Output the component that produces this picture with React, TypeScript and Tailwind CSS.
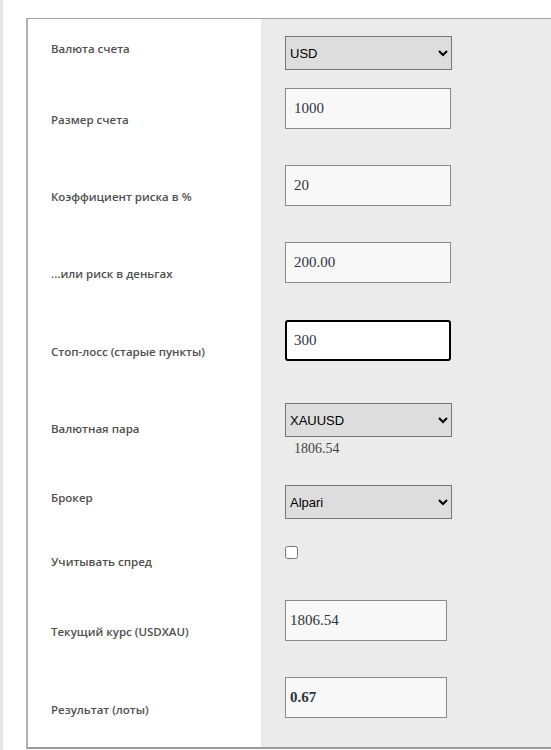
import React from "react";

type Row = {
  label: string;
  rowCls: string;
  labelCls: string;
  control: React.ReactNode;
};

const serif = "font-['Liberation_Serif',Georgia,serif]";
const arial = "font-['Liberation_Sans',Arial,sans-serif]";
const inputBase = `block h-[41px] border border-[#8a8a8a] bg-[#f8f8f8] text-[15px] text-[#2e3440] outline-none ${serif}`;
const selectBase = `block h-[34px] w-[167px] border border-[#767676] bg-[#dddddd] pl-0 text-[13px] text-black outline-none ${arial}`;

export default function App() {
  const rows: Row[] = [
    {
      label: "Валюта счета",
      rowCls: "h-[52px]",
      labelCls: "pt-[22px]",
      control: (
        <select className={selectBase} defaultValue="USD">
          <option>USD</option>
          <option>EUR</option>
        </select>
      ),
    },
    {
      label: "Размер счета",
      rowCls: "h-[77px]",
      labelCls: "pt-[41px]",
      control: <input className={`${inputBase} w-[166px] pl-[8px]`} defaultValue="1000" />,
    },
    {
      label: "Коэффициент риска в %",
      rowCls: "h-[77px]",
      labelCls: "pt-[41px]",
      control: <input className={`${inputBase} w-[166px] pl-[8px]`} defaultValue="20" />,
    },
    {
      label: "...или риск в деньгах",
      rowCls: "h-[78px]",
      labelCls: "pt-[41px]",
      control: <input className={`${inputBase} w-[166px] pl-[8px]`} defaultValue="200.00" />,
    },
    {
      label: "Стоп-лосс (старые пункты)",
      rowCls: "h-[83px]",
      labelCls: "pt-[41px]",
      control: (
        <input
          className={`block h-[41px] w-[166px] rounded-[3px] border-2 border-black bg-white pl-[7px] text-[15px] text-[#2e3440] outline-none ${serif}`}
          defaultValue="300"
        />
      ),
    },
    {
      label: "Валютная пара",
      rowCls: "h-[82px]",
      labelCls: "pt-[35px]",
      control: (
        <div>
          <select className={selectBase} defaultValue="XAUUSD">
            <option>XAUUSD</option>
            <option>EURUSD</option>
          </select>
          <div className={`mt-[3px] pl-[9px] text-[14px] leading-[18px] text-[#444] ${serif}`}>1806.54</div>
        </div>
      ),
    },
    {
      label: "Брокер",
      rowCls: "h-[61px]",
      labelCls: "pt-[22px]",
      control: (
        <select className={selectBase} defaultValue="Alpari">
          <option>Alpari</option>
        </select>
      ),
    },
    {
      label: "Учитывать спред",
      rowCls: "h-[54px]",
      labelCls: "pt-[25px]",
      control: <input type="checkbox" className="m-0 block h-[13px] w-[13px]" />,
    },
    {
      label: "Текущий курс (USDXAU)",
      rowCls: "h-[77px]",
      labelCls: "pt-[41px]",
      control: <input className={`${inputBase} w-[162px] pl-[4px]`} defaultValue="1806.54" />,
    },
    {
      label: "Результат (лоты)",
      rowCls: "h-[87px]",
      labelCls: "pt-[42px]",
      control: <input className={`${inputBase} w-[162px] pl-[4px] font-bold`} defaultValue="0.67" />,
    },
  ];

  return (
    <div className="min-h-[750px] w-[551px] overflow-hidden border-l-[3px] border-[#e6e6e6] bg-white pl-[23px] pt-[18px]">
      <div className="w-[560px] border-t border-l-2 border-b-2 border-t-[#a3a3a3] border-l-[#b0b0b0] border-b-[#9a9a9a]">
        {rows.map((r, i) => (
          <div key={i} className={`grid grid-cols-[233px_1fr] ${r.rowCls}`}>
            <div
              className={`bg-white pl-[23px] text-[11.5px] font-semibold leading-[16px] text-[#4f4f4f] font-['Open_Sans','Noto_Sans',sans-serif] ${r.labelCls}`}
            >
              {r.label}
            </div>
            <div className="bg-[#ebebeb] pl-[24px] pt-[17px]">{r.control}</div>
          </div>
        ))}
      </div>
    </div>
  );
}
